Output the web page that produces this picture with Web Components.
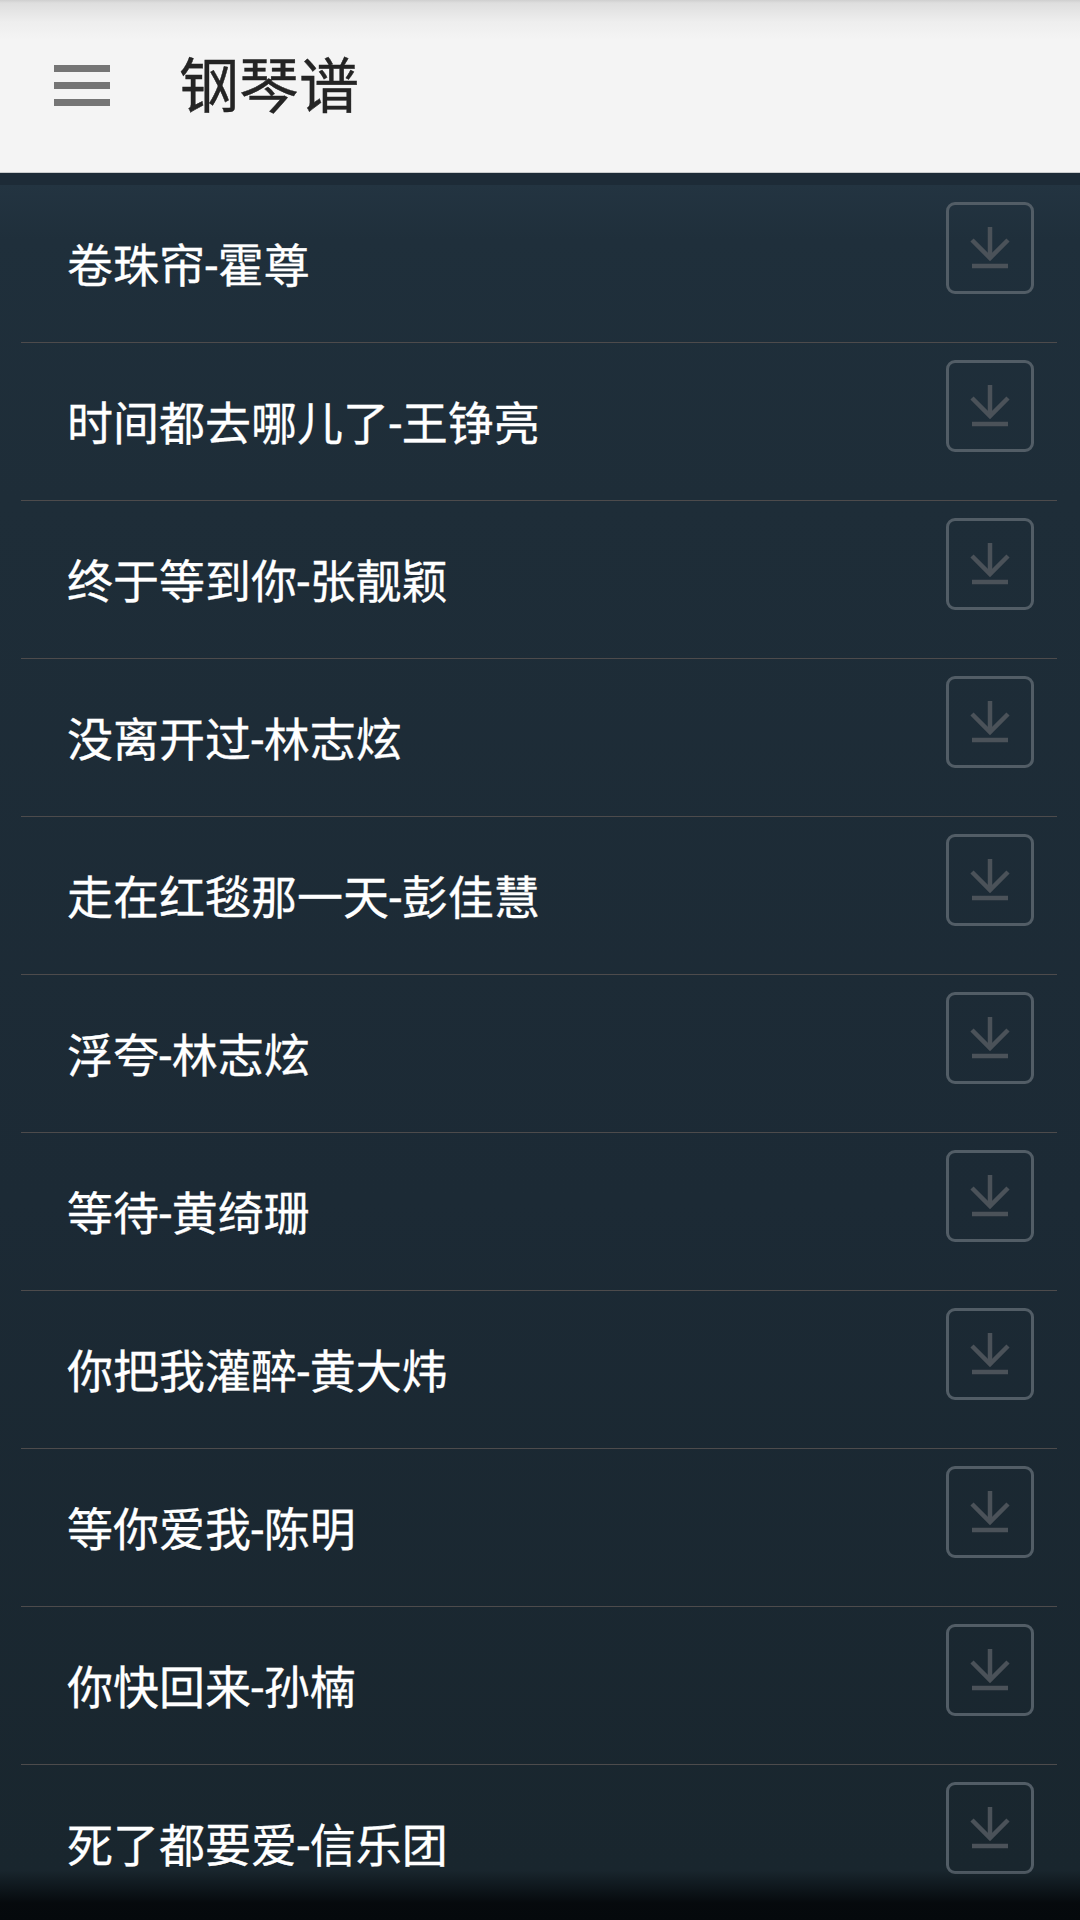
<!DOCTYPE html>
<html lang="zh">
<head>
<meta charset="utf-8">
<style>
  html, body { margin: 0; padding: 0; background: #1c2933; }
  body { font-family: "Roboto", "Noto Sans CJK SC", sans-serif; }
</style>
</head>
<body>
<app-shell>
  <app-bar title="钢琴谱"></app-bar>
  <song-row>卷珠帘-霍尊</song-row>
  <song-row>时间都去哪儿了-王铮亮</song-row>
  <song-row>终于等到你-张靓颖</song-row>
  <song-row>没离开过-林志炫</song-row>
  <song-row>走在红毯那一天-彭佳慧</song-row>
  <song-row>浮夸-林志炫</song-row>
  <song-row>等待-黄绮珊</song-row>
  <song-row>你把我灌醉-黄大炜</song-row>
  <song-row>等你爱我-陈明</song-row>
  <song-row>你快回来-孙楠</song-row>
  <song-row>死了都要爱-信乐团</song-row>
</app-shell>

<script>
class AppShell extends HTMLElement {
  constructor() {
    super();
    this.attachShadow({ mode: "open" });
    this.shadowRoot.innerHTML = `
    <style>
      :host {
        display: block;
        position: relative;
        width: 1080px;
        height: 1920px;
        overflow: hidden;
        background: linear-gradient(#233441 185px, #1f2f3b 240px, #1e2d38 500px, #1c2a35 1200px, #19262e 1870px);
      }
      #fade {
        position: absolute;
        left: 0;
        right: 0;
        bottom: 0;
        height: 50px;
        background: linear-gradient(rgba(5,9,12,0), rgba(5,9,12,0.97) 66%, #05090c);
        pointer-events: none;
      }
    </style>
    <slot></slot>
    <div id="fade"></div>
    `;
  }
}

class AppBar extends HTMLElement {
  constructor() {
    super();
    this.attachShadow({ mode: "open" });
    this.shadowRoot.innerHTML = `
    <style>
      :host {
        display: block;
      }
      header {
        display: flex;
        align-items: center;
        box-sizing: border-box;
        height: 173px;
        padding: 0 0 0 54px;
        background: linear-gradient(#cfcfcf 0, #dedede 3px, #eeeeee 22px, #f4f4f4 40px);
        border-bottom: 1px solid #c9cbcc;
      }
      #menu {
        display: flex;
        flex-direction: column;
        gap: 10px;
        width: 56px;
        margin: 0 69px 2px 0;
      }
      #menu span {
        height: 7px;
        background: #757575;
      }
      h1 {
        margin: 3px 0 0;
        font-size: 60px;
        font-weight: 400;
        line-height: 68px;
        color: #242424;
        -webkit-text-stroke: 0.4px #242424;
      }
      #strip {
        height: 12px;
        background: #1d2b37;
      }
    </style>
    <header>
      <div id="menu"><span></span><span></span><span></span></div>
      <h1></h1>
    </header>
    <div id="strip"></div>
    `;
    this.shadowRoot.querySelector("h1").textContent = this.getAttribute("title");
  }
}

class DownloadButton extends HTMLElement {
  constructor() {
    super();
    this.attachShadow({ mode: "open" });
    this.shadowRoot.innerHTML = `
    <style>
      :host {
        display: flex;
        align-items: center;
        justify-content: center;
        box-sizing: border-box;
        width: 88px;
        height: 92px;
        border: 3px solid #525d66;
        border-radius: 9px;
      }
      svg {
        display: block;
        width: 40px;
        height: 44px;
        fill: none;
        stroke: #4b5259;
        stroke-width: 4.5;
      }
    </style>
    <svg viewBox="0 0 40 44">
      <path d="M20 1V32"/>
      <path d="M2 14L20 32L38 14"/>
      <path d="M2 40H38"/>
    </svg>
    `;
  }
}

class SongRow extends HTMLElement {
  constructor() {
    super();
    this.attachShadow({ mode: "open" });
    this.shadowRoot.innerHTML = `
    <style>
      :host {
        display: flex;
        box-sizing: border-box;
        height: 158px;
        margin: 0 23px 0 21px;
        padding: 17px 23px 0 46px;
        border-bottom: 1px solid #4d4b4c;
      }
      #name {
        flex: 1;
        padding-top: 18px;
        font-size: 46px;
        line-height: 92px;
        color: #ffffff;
        -webkit-text-stroke: 0.3px #ffffff;
      }
    </style>
    <div id="name"><slot></slot></div>
    <download-button></download-button>
    `;
  }
}

customElements.define("app-shell", AppShell);
customElements.define("app-bar", AppBar);
customElements.define("download-button", DownloadButton);
customElements.define("song-row", SongRow);
</script>
</body>
</html>
